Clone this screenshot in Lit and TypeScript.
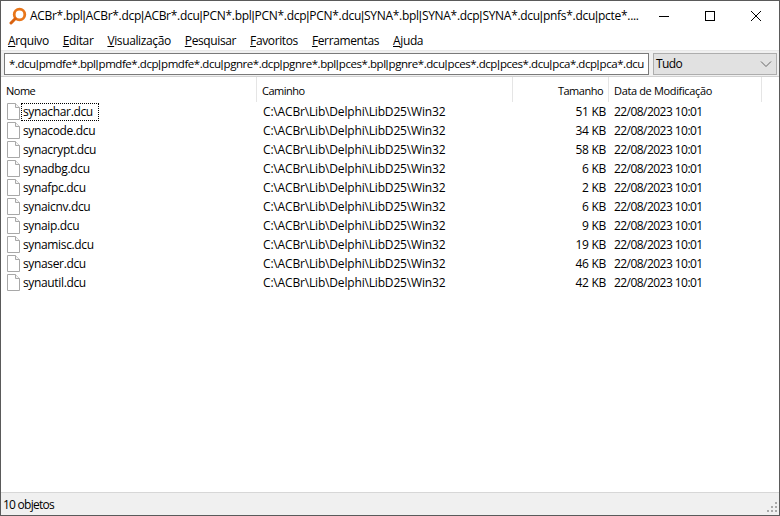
import { LitElement, html, css } from "lit";
import { customElement } from "lit/decorators.js";

const rows = [
  ["synachar.dcu", "51 KB"], ["synacode.dcu", "34 KB"], ["synacrypt.dcu", "58 KB"], ["synadbg.dcu", "6 KB"],
  ["synafpc.dcu", "2 KB"], ["synaicnv.dcu", "6 KB"], ["synaip.dcu", "9 KB"], ["synamisc.dcu", "19 KB"],
  ["synaser.dcu", "46 KB"], ["synautil.dcu", "42 KB"],
];
const menus: [string, string][] = [["A", "rquivo"], ["E", "ditar"], ["V", "isualização"], ["P", "esquisar"], ["F", "avoritos"], ["F", "erramentas"], ["A", "juda"]];
const TITLE = "ACBr*.bpl|ACBr*.dcp|ACBr*.dcu|PCN*.bpl|PCN*.dcp|PCN*.dcu|SYNA*.bpl|SYNA*.dcp|SYNA*.dcu|pnfs*.dcu|pcte*....";
const FILTER = "*.dcu|pmdfe*.bpl|pmdfe*.dcp|pmdfe*.dcu|pgnre*.dcp|pgnre*.bpl|pces*.bpl|pgnre*.dcu|pces*.dcp|pces*.dcu|pca*.dcp|pca*.dcu";

const piped = (s: string) => {
  const parts = s.split("|");
  return parts.map((p, i) => (i ? html`<span class="pipe">|</span>${p}` : html`${p}`));
};

@customElement("app-root")
export class AppRoot extends LitElement {
  static styles = css`
    :host { display: block; width: 780px; height: 516px; font-family: "Open Sans", "Noto Sans", sans-serif; font-size: 12px; color: #000; }
    .win { box-sizing: border-box; width: 780px; height: 516px; border: 1px solid #5a5a5a; background: #fff; display: flex; flex-direction: column; overflow: hidden; }
    .pipe { font-family: "Liberation Sans", sans-serif; letter-spacing: 0; }
    .title { height: 29px; display: flex; align-items: center; flex: none; }
    .logo { margin-left: 8px; width: 18px; height: 18px; flex: none; }
    .ttext { margin-left: 3px; flex: 1; white-space: nowrap; font-size: 12px; letter-spacing: -0.3px; min-width: 0; }
    .wbtns { display: flex; flex: none; }
    .wb { width: 46px; height: 29px; display: flex; align-items: center; justify-content: center; }
    .menu { height: 20px; display: flex; align-items: center; padding-left: 7px; gap: 14px; flex: none; letter-spacing: -0.38px; }
    .menu u { text-decoration: underline; text-underline-offset: 1px; }
    .tools { height: 26px; background: #f0f0f0; flex: none; display: flex; align-items: center; padding: 0 3px; gap: 4px; box-sizing: border-box; border-top: 1px solid #e8e8e8; }
    .input { box-sizing: border-box; width: 645px; height: 22px; background: #fff; border: 1px solid #7a7a7a; display: flex; align-items: center; padding: 0 4px; white-space: nowrap; overflow: hidden; flex: none; font-size: 11.5px; letter-spacing: -0.45px; }
    .input .wrap { display: block; }
    .combo { box-sizing: border-box; width: 124px; height: 22px; background: #e1e1e1; border: 1px solid #adadad; display: flex; align-items: center; justify-content: space-between; padding: 0 4px 0 2px; flex: none; letter-spacing: -0.6px; }
    .list { flex: 1; background: #fff; display: flex; flex-direction: column; border-top: 1px solid #d0d0d0; }
    .head { display: grid; grid-template-columns: 256px 256px 96px 153px; height: 25px; flex: none; font-size: 11px; letter-spacing: -0.5px; }
    .head div { display: flex; align-items: center; padding: 2px 5px 0; border-right: 1px solid #e5e5e5; box-sizing: border-box; }
    .head .num { justify-content: flex-end; }
    .head .dt { letter-spacing: -0.35px; }
    .rows { display: flex; flex-direction: column; }
    .row { display: grid; grid-template-columns: 256px 256px 96px 153px; height: 19px; align-items: center; }
    .name { display: flex; align-items: center; padding-left: 6px; letter-spacing: -0.35px; }
    .name svg { flex: none; margin-right: 1px; }
    .name span { padding: 0 5px 0 1px; line-height: 16px; border: 1px dotted transparent; }
    .name span.focus { border-color: #000; }
    .path { padding-left: 6px; letter-spacing: -0.17px; }
    .size { text-align: right; padding-right: 3px; letter-spacing: -0.3px; }
    .date { padding-left: 5px; letter-spacing: -0.55px; }
    .status { height: 23px; flex: none; background: #f0f0f0; border-top: 1px solid #d7d7d7; display: flex; align-items: center; justify-content: space-between; padding-left: 2px; box-sizing: border-box; letter-spacing: -0.75px; }
    .grip { margin-right: 1px; margin-top: 7px; }
  `;

  render() {
    return html`<div class="win">
      <div class="title">
        <svg class="logo" viewBox="0 0 18 18"><circle cx="10.5" cy="7.5" r="5.3" fill="#fff" stroke="#e8761a" stroke-width="2.8"/><path d="M6.2 11.8 L2 16" stroke="#d9620f" stroke-width="3" stroke-linecap="round"/></svg>
        <div class="ttext">${piped(TITLE)}</div>
        <div class="wbtns">
          <div class="wb"><svg width="12" height="12"><path d="M1 6.5H11" stroke="#000"/></svg></div>
          <div class="wb"><svg width="12" height="12"><rect x="1.5" y="1.5" width="9" height="9" fill="none" stroke="#000"/></svg></div>
          <div class="wb"><svg width="12" height="12"><path d="M1 1L11 11M11 1L1 11" stroke="#000"/></svg></div>
        </div>
      </div>
      <div class="menu">${menus.map(([a, b]) => html`<span><u>${a}</u>${b}</span>`)}</div>
      <div class="tools">
        <div class="input"><span class="wrap">${piped(FILTER)}</span></div>
        <div class="combo"><span>Tudo</span><svg width="12" height="8"><path d="M1 1.5L6 6.5L11 1.5" fill="none" stroke="#666"/></svg></div>
      </div>
      <div class="list">
        <div class="head"><div>Nome</div><div>Caminho</div><div class="num">Tamanho</div><div class="dt">Data de Modificação</div></div>
        <div class="rows">
          ${rows.map(([n, s], i) => html`<div class="row">
            <div class="name"><svg width="13" height="17" viewBox="0 0 13 17"><path d="M0.5 0.5H8.5L12.5 4.5V16.5H0.5Z" fill="#fff" stroke="#a8a8a8"/><path d="M8.5 0.5V4.5H12.5" fill="#f4f4f4" stroke="#a8a8a8"/></svg><span class=${i === 0 ? "focus" : ""}>${n}</span></div>
            <div class="path">C:\\ACBr\\Lib\\Delphi\\LibD25\\Win32</div>
            <div class="size">${s}</div>
            <div class="date">22/08/2023 10:01</div>
          </div>`)}
        </div>
      </div>
      <div class="status"><span>10 objetos</span>
        <svg class="grip" width="11" height="11" fill="#a9a9a9"><rect x="8" y="0" width="2" height="2"/><rect x="4" y="4" width="2" height="2"/><rect x="8" y="4" width="2" height="2"/><rect x="0" y="8" width="2" height="2"/><rect x="4" y="8" width="2" height="2"/><rect x="8" y="8" width="2" height="2"/></svg>
      </div>
    </div>`;
  }
}
